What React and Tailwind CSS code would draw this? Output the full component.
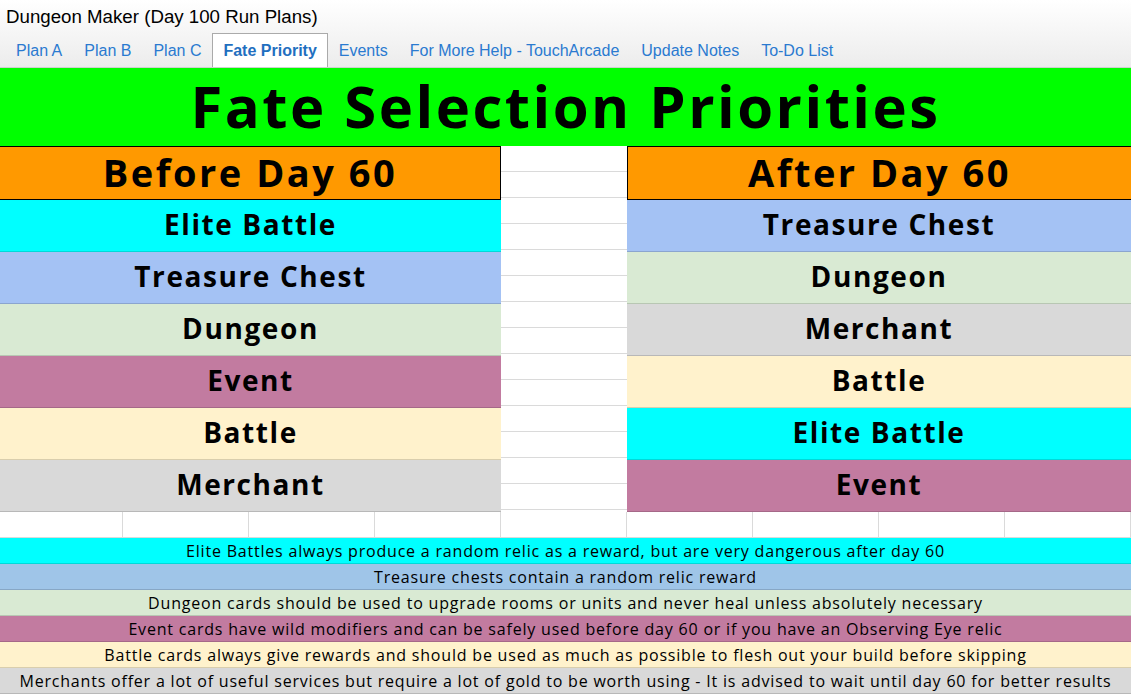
const TABS = ['Plan A', 'Plan B', 'Plan C', 'Fate Priority', 'Events', 'For More Help - TouchArcade', 'Update Notes', 'To-Do List'];

const BEFORE = [
  { label: 'Elite Battle', bg: 'bg-[#00ffff]' },
  { label: 'Treasure Chest', bg: 'bg-[#a4c2f4]' },
  { label: 'Dungeon', bg: 'bg-[#d9ead3]' },
  { label: 'Event', bg: 'bg-[#c27ba0]' },
  { label: 'Battle', bg: 'bg-[#fff2cc]' },
  { label: 'Merchant', bg: 'bg-[#d9d9d9]' },
];

const AFTER = [
  { label: 'Treasure Chest', bg: 'bg-[#a4c2f4]' },
  { label: 'Dungeon', bg: 'bg-[#d9ead3]' },
  { label: 'Merchant', bg: 'bg-[#d9d9d9]' },
  { label: 'Battle', bg: 'bg-[#fff2cc]' },
  { label: 'Elite Battle', bg: 'bg-[#00ffff]' },
  { label: 'Event', bg: 'bg-[#c27ba0]' },
];

const NOTES = [
  { text: 'Elite Battles always produce a random relic as a reward, but are very dangerous after day 60', bg: 'bg-[#00ffff]' },
  { text: 'Treasure chests contain a random relic reward', bg: 'bg-[#9fc5e8]' },
  { text: 'Dungeon cards should be used to upgrade rooms or units and never heal unless absolutely necessary', bg: 'bg-[#d9ead3]' },
  { text: 'Event cards have wild modifiers and can be safely used before day 60 or if you have an Observing Eye relic', bg: 'bg-[#c27ba0]' },
  { text: 'Battle cards always give rewards and should be used as much as possible to flesh out your build before skipping', bg: 'bg-[#fff2cc]' },
  { text: 'Merchants offer a lot of useful services but require a lot of gold to be worth using - It is advised to wait until day 60 for better results', bg: 'bg-[#d9d9d9]' },
];

const SHEET_FONT = "font-['Open_Sans',sans-serif]";

function PriorityColumn({ title, items, side }) {
  const edge = side === 'left' ? 'border-r' : 'border-l';
  return (
    <div className="flex flex-col">
      <div className={`h-[54px] flex items-center justify-center pb-[3px] bg-[#ff9900] border-y border-black ${edge} text-[38px] leading-none font-bold text-black tracking-[2.5px]`}>
        {title}
      </div>
      {items.map(it => (
        <div key={it.label} className={`h-[52px] flex items-center justify-center pb-[3px] ${it.bg} border-b border-black/15 text-[28px] leading-none font-bold text-black tracking-[1.6px]`}>
          {it.label}
        </div>
      ))}
    </div>
  );
}

export default function App() {
  return (
    <div className="w-[1131px] h-[696px] overflow-hidden bg-white">
      <div className="bg-gradient-to-b from-white to-[#ececec] border-b border-[#cfcfcf] font-['Liberation_Sans',Arial,sans-serif]">
        <div className="h-[34px] pl-[6px] pt-[6px] text-[18.7px] text-black leading-[22px]">Dungeon Maker (Day 100 Run Plans)</div>
        <div className="flex pl-[5px] h-[33px] items-end">
          {TABS.map(t => (
            <div
              key={t}
              className={t === 'Fate Priority'
                ? 'h-[34px] px-[10px] flex items-center bg-white border border-b-0 border-[#aaaaaa] text-[16px] font-bold text-[#1f6fc0]'
                : 'h-[34px] px-[10px] flex items-center border border-b-0 border-transparent text-[16px] text-[#2a7ad0]'}
            >
              {t}
            </div>
          ))}
        </div>
      </div>

      <div className={SHEET_FONT}>
        <div className="h-[78px] bg-[#00ff00] flex items-center justify-center pb-[3px] text-[58px] font-bold text-black tracking-[2.5px] leading-none">
          Fate Selection Priorities
        </div>

        <div className="grid grid-cols-[501px_126px_504px]">
          <PriorityColumn title="Before Day 60" items={BEFORE} side="left" />
          <div className="flex flex-col">
            {Array.from({ length: 14 }).map((_, i) => (
              <div key={i} className="h-[26px] border-b border-[#dadada]" />
            ))}
          </div>
          <PriorityColumn title="After Day 60" items={AFTER} side="right" />
        </div>

        <div className="grid grid-cols-[123px_126px_126px_126px_126px_126px_126px_126px_126px] h-[26px] border-b border-[#dadada]">
          {Array.from({ length: 9 }).map((_, i) => (
            <div key={i} className="border-r border-[#dadada]" />
          ))}
        </div>

        {NOTES.map(n => (
          <div key={n.text} className={`h-[26px] flex items-center justify-center ${n.bg} border-b border-black/15 text-[16px] text-black tracking-[0.8px] whitespace-nowrap`}>
            {n.text}
          </div>
        ))}
      </div>
    </div>
  );
}
